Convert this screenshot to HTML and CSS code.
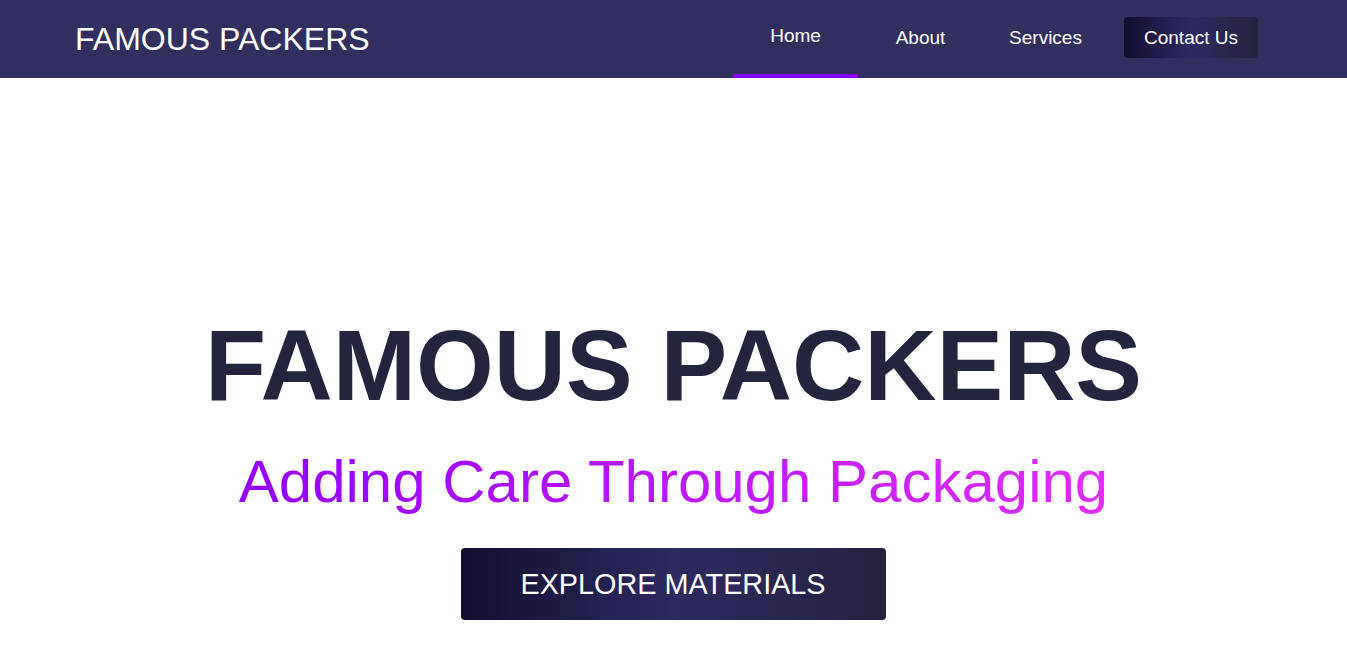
FILE: index.html
```html
<!DOCTYPE html>
<html lang="en">
<head>
<meta charset="utf-8">
<title>Famous Packers</title>
<link rel="stylesheet" href="styles.css">
</head>
<body>
<header class="navbar">
  <div class="brand">FAMOUS PACKERS</div>
  <nav class="nav-links">
    <a class="nav-link active" href="#"><span>Home</span></a>
    <a class="nav-link" href="#"><span>About</span></a>
    <a class="nav-link" href="#"><span>Services</span></a>
    <a class="contact-btn" href="#">Contact Us</a>
  </nav>
</header>
<main class="hero">
  <h1 class="hero-title">FAMOUS PACKERS</h1>
  <p class="hero-subtitle">Adding Care Through Packaging</p>
  <a class="hero-btn" href="#">EXPLORE MATERIALS</a>
</main>
</body>
</html>
```

FILE: styles.css
```css
* { box-sizing: border-box; }

body {
  margin: 0;
  font-family: "Liberation Sans", Arial, sans-serif;
  background: #ffffff;
}

a { text-decoration: none; color: inherit; }

.navbar {
  height: 78px;
  background: #312e60;
  display: flex;
  align-items: center;
  justify-content: space-between;
  padding: 0 89px 0 75px;
}

.brand {
  color: #ffffff;
  font-size: 32px;
  line-height: 1;
  padding-bottom: 1px;
}

.nav-links {
  display: flex;
  align-items: center;
  height: 100%;
}

.nav-link {
  position: relative;
  width: 125px;
  height: 100%;
  display: flex;
  align-items: center;
  justify-content: center;
  padding-bottom: 2px;
  color: #ffffff;
  font-size: 19px;
}

.nav-link.active span {
  transform: translateY(-2px);
}

.nav-link.active::after {
  content: "";
  position: absolute;
  left: 0;
  right: 0;
  bottom: 0;
  height: 4px;
  background: #8c00ff;
}

.contact-btn {
  margin-left: 16px;
  margin-bottom: 3px;
  height: 41px;
  padding: 0 20px;
  display: flex;
  align-items: center;
  color: #ffffff;
  font-size: 19px;
  border-radius: 4px;
  background: linear-gradient(90deg, #120e2f 0%, #2e2a62 50%, #25223f 100%);
}

.hero {
  display: flex;
  flex-direction: column;
  align-items: center;
  padding-top: 230px;
}

.hero-title {
  margin: 0;
  font-size: 100px;
  line-height: 115px;
  font-weight: 700;
  color: #25243f;
}

.hero-subtitle {
  margin: 24px 0 0;
  font-size: 60px;
  line-height: 69px;
  background: linear-gradient(90deg, #9400ff 0%, #e12dff 100%);
  -webkit-background-clip: text;
  background-clip: text;
  color: transparent;
}

.hero-btn {
  margin-top: 32px;
  padding: 20px 60px 20px 59px;
  font-size: 28.8px;
  line-height: 32px;
  color: #ffffff;
  border-radius: 4px;
  background: linear-gradient(90deg, #120e2f 0%, #2e2a62 50%, #25223f 100%);
}
```
